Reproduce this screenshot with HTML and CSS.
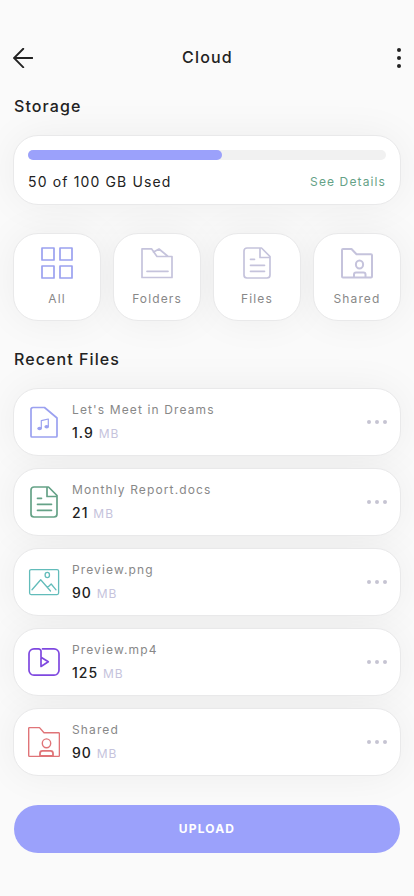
FILE: index.html
```html
<!DOCTYPE html>
<html lang="en">
<head>
<meta charset="utf-8">
<meta name="viewport" content="width=device-width, initial-scale=1">
<title>Cloud</title>
<link rel="stylesheet" href="styles.css">
</head>
<body>
<svg class="defs" width="0" height="0" aria-hidden="true">
  <symbol id="doc" viewBox="0 0 32 32">
    <path d="M20.500 1H6a3 3 0 0 0-3 3v24a3 3 0 0 0 3 3h20a3 3 0 0 0 3-3V9.500L20.500 1H19v9.500h10M9.500 12.300h4M9.500 18.300h14M9.500 24.300h14"/>
  </symbol>
  <symbol id="more" viewBox="0 0 20 4">
    <circle cx="2" cy="2" r="2"/><circle cx="10" cy="2" r="2"/><circle cx="18" cy="2" r="2"/>
  </symbol>
</svg>
<main class="app">
  <header class="topbar">
    <svg class="back" viewBox="0 0 20 20"><path d="M19.500 10H1M10.300.8L1 10l9.300 9.300"/></svg>
    <h1 class="title">Cloud</h1>
    <svg class="menu" viewBox="0 0 4 20"><circle cx="2" cy="2" r="2"/><circle cx="2" cy="10" r="2"/><circle cx="2" cy="18" r="2"/></svg>
  </header>

  <h2 class="heading">Storage</h2>
  <section class="card storage">
    <div class="track"><div class="bar"></div></div>
    <div class="usage"><span class="used">50 of 100 GB Used</span><a class="details">See Details</a></div>
  </section>

  <nav class="tiles">
    <div class="card tile">
      <svg class="icon blue" viewBox="0 0 32 32"><path d="M1 1h12v12H1zM19 1h12v12H19zM1 19h12v12H1zM19 19h12v12H19z"/></svg>
      <span class="label">All</span>
    </div>
    <div class="card tile">
      <svg class="icon lilac" viewBox="0 0 32 32"><path d="M1 1.800h9.500L16 9.500h15v21H1zM12.500 5L18 2l8.500 7M6 24.300h21"/></svg>
      <span class="label">Folders</span>
    </div>
    <div class="card tile">
      <svg class="icon lilac"><use href="#doc"/></svg>
      <span class="label">Files</span>
    </div>
    <div class="card tile">
      <svg class="icon lilac heavy" viewBox="0 0 32 32"><path d="M2 2h8.500l5 5.300H30a1 1 0 0 1 1 1V29.500a1 1 0 0 1-1 1H2a1 1 0 0 1-1-1V3a1 1 0 0 1 1-1zM13 30v-2.500a2 2 0 0 1 2-2h7.500a2 2 0 0 1 2 2V30"/><ellipse cx="18.500" cy="17.500" rx="3.600" ry="4"/></svg>
      <span class="label">Shared</span>
    </div>
  </nav>

  <h2 class="heading">Recent Files</h2>
  <section class="files">
    <article class="card file">
      <svg class="icon blue" viewBox="0 0 32 32"><path d="M5 1.500h11.500L29 12v18a1 1 0 0 1-1 1H4a1 1 0 0 1-1-1V3.500a2 2 0 0 1 2-2z"/><path class="thin" d="M13.300 22v-7.300l7-1.700v7.300"/><ellipse class="fill" cx="11.600" cy="22.500" rx="2.300" ry="1.700"/><ellipse class="fill" cx="18.700" cy="20.800" rx="2.300" ry="1.700"/></svg>
      <div class="info"><p class="name">Let's Meet in Dreams</p><p class="size">1.9 <span class="unit">MB</span></p></div>
      <svg class="dots"><use href="#more"/></svg>
    </article>
    <article class="card file">
      <svg class="icon green"><use href="#doc"/></svg>
      <div class="info"><p class="name">Monthly Report.docs</p><p class="size">21 <span class="unit">MB</span></p></div>
      <svg class="dots"><use href="#more"/></svg>
    </article>
    <article class="card file">
      <svg class="icon teal" viewBox="0 0 32 32"><rect x="1.600" y="3.600" width="29" height="25" rx="1.500"/><ellipse cx="19.300" cy="9" rx="2.200" ry="2.600"/><path d="M4 23.800l8.700-10L22.500 25M19.500 21.500l3.700-3.500 4.800 5.800"/></svg>
      <div class="info"><p class="name">Preview.png</p><p class="size">90 <span class="unit">MB</span></p></div>
      <svg class="dots"><use href="#more"/></svg>
    </article>
    <article class="card file">
      <svg class="icon purple" viewBox="0 0 32 32"><path d="M14.500 2.800H26a5 5 0 0 1 5 5v16.400a5 5 0 0 1-5 5H6a5 5 0 0 1-5-5V7.800a5 5 0 0 1 5-5h4.500a2.500 2.500 0 0 1 2.500 2.500v15.200l7.300-4.700L13 11.200"/></svg>
      <div class="info"><p class="name">Preview.mp4</p><p class="size">125 <span class="unit">MB</span></p></div>
      <svg class="dots"><use href="#more"/></svg>
    </article>
    <article class="card file">
      <svg class="icon red" viewBox="0 0 32 32"><path d="M1.500 1.600h10l4.500 5.200h14.600a.8.800 0 0 1 .8.800v22a.8.800 0 0 1-.8.800H1.500a.8.800 0 0 1-.8-.8V2.400a.8.800 0 0 1 .8-.8z"/><ellipse cx="18.500" cy="17.300" rx="4.200" ry="4.400"/><path class="bold" d="M12 29.800v-2.500a2.500 2.500 0 0 1 2.500-2.500h8a2.500 2.500 0 0 1 2.500 2.500v2.500z"/></svg>
      <div class="info"><p class="name">Shared</p><p class="size">90 <span class="unit">MB</span></p></div>
      <svg class="dots"><use href="#more"/></svg>
    </article>
  </section>

  <button class="upload">UPLOAD</button>
</main>
</body>
</html>
```

FILE: styles.css
```css
* { box-sizing: border-box; }

body {
  margin: 0;
  background: #fafafa;
  color: #222;
  font-family: Inter, "Liberation Sans", sans-serif;
}

h1, h2, p { margin: 0; font-weight: 500; }

.defs { display: block; }

.app {
  isolation: isolate;
  width: 414px;
  height: 896px;
  padding: 45px 13px 0;
  overflow: hidden;
}

.topbar {
  display: flex;
  align-items: center;
  justify-content: space-between;
  height: 26px;
}

.back { width: 20px; height: 20px; fill: none; stroke: #222; stroke-width: 1.9; stroke-linecap: round; }
.menu { width: 4px; height: 20px; fill: #222; }
.title { margin: 0 0 2px -15px; font-size: 16px; line-height: 24px; letter-spacing: 1.2px; }

.heading {
  height: 24px;
  padding-left: 1px;
  font-size: 16px;
  line-height: 24px;
  letter-spacing: 1.08px;
  font-weight: 500;
}
.topbar + .heading { margin-top: 23px; }

.card {
  position: relative;
  background: #fff;
  border: 1px solid #e9e9ea;
  border-radius: 25px;
}
.card::before {
  content: "";
  position: absolute;
  inset: 0;
  z-index: -1;
  border-radius: inherit;
  box-shadow: 0 0 40px rgba(0, 0, 0, 0.06);
}

.storage { height: 70px; margin-top: 17px; padding: 14px; }
.track { height: 10px; border-radius: 5px; background: #f1f1f1; }
.bar { width: 194px; height: 10px; border-radius: 5px; background: #9ba1fb; }
.usage { display: flex; justify-content: space-between; align-items: center; margin-top: 12px; line-height: 20px; }
.used { font-size: 14px; letter-spacing: 1.14px; }
.details { font-size: 12px; letter-spacing: 1.12px; color: #65a287; }

.tiles { display: grid; grid-template-columns: repeat(4, 88px); gap: 12px; margin: 28px 0 26px; }
.tile { display: flex; flex-direction: column; align-items: center; height: 88px; padding-top: 13px; }
.label { margin-top: 11px; font-size: 12px; line-height: 18px; letter-spacing: 1.12px; color: #888; }

.icon { flex: none; width: 32px; height: 32px; fill: none; stroke: currentColor; stroke-width: 1.7; stroke-linejoin: round; stroke-linecap: round; }
.heavy { stroke-width: 2; }
.blue { color: #9ba1f0; }
.lilac { color: #c5c3dc; }
.green { color: #65a287; }
.teal { color: #62bcba; stroke-width: 1.3; }
.purple { color: #7f48e0; }
.red { color: #e07478; stroke-width: 1.4; }
.thin { stroke-width: 1.2; }
.bold { stroke-width: 1.8; }
.fill { fill: currentColor; stroke: none; }

.files { display: grid; gap: 12px; margin-top: 17px; }
.file { display: flex; align-items: center; height: 68px; padding: 0 13px 0 14px; }
.info { flex: 1; margin-left: 12px; }
.name { margin-top: 1px; font-size: 12px; line-height: 18px; letter-spacing: 1.12px; color: #888; font-weight: 400; }
.size { margin-top: 3px; font-size: 14px; line-height: 22px; letter-spacing: 1.05px; }
.unit { font-size: 12px; letter-spacing: 1px; color: #c5c3dc; font-weight: 400; }
.dots { width: 20px; height: 4px; fill: #c6c4d2; }

.upload {
  display: block;
  width: 386px;
  height: 48px;
  margin: 29px 1px 0;
  border: 0;
  border-radius: 24px;
  background: #9ba1fb;
  color: #fff;
  font: 700 12px/46px Inter, "Liberation Sans", sans-serif;
  letter-spacing: 1.15px;
}
```
